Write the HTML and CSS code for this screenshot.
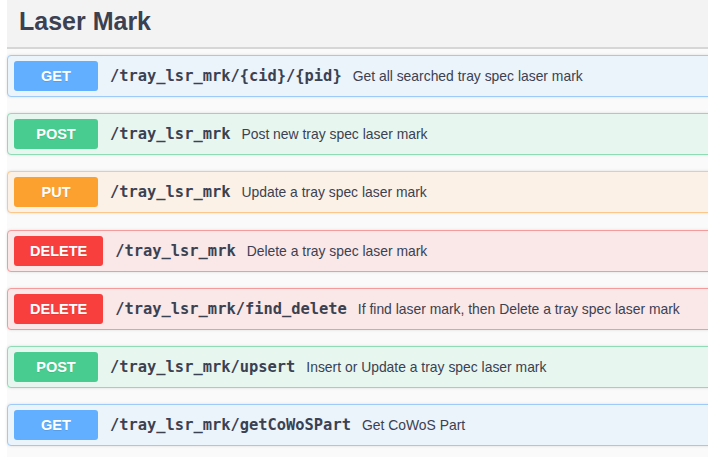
FILE: index.html
```html
<!DOCTYPE html>
<html lang="en">
<head>
<meta charset="utf-8">
<title>Laser Mark</title>
<link rel="stylesheet" href="styles.css">
</head>
<body>
<div class="page">
  <header class="tag-header">
    <h3 class="tag-title">Laser Mark</h3>
  </header>
  <div class="ops">
    <div class="op op-get">
      <span class="method">GET</span>
      <span class="path">/tray_lsr_mrk/{cid}/{pid}</span>
      <span class="desc">Get all searched tray spec laser mark</span>
    </div>
    <div class="op op-post">
      <span class="method">POST</span>
      <span class="path">/tray_lsr_mrk</span>
      <span class="desc">Post new tray spec laser mark</span>
    </div>
    <div class="op op-put">
      <span class="method">PUT</span>
      <span class="path">/tray_lsr_mrk</span>
      <span class="desc">Update a tray spec laser mark</span>
    </div>
    <div class="op op-delete">
      <span class="method">DELETE</span>
      <span class="path">/tray_lsr_mrk</span>
      <span class="desc">Delete a tray spec laser mark</span>
    </div>
    <div class="op op-delete">
      <span class="method">DELETE</span>
      <span class="path">/tray_lsr_mrk/find_delete</span>
      <span class="desc">If find laser mark, then Delete a tray spec laser mark</span>
    </div>
    <div class="op op-post">
      <span class="method">POST</span>
      <span class="path">/tray_lsr_mrk/upsert</span>
      <span class="desc">Insert or Update a tray spec laser mark</span>
    </div>
    <div class="op op-get">
      <span class="method">GET</span>
      <span class="path">/tray_lsr_mrk/getCoWoSPart</span>
      <span class="desc">Get CoWoS Part</span>
    </div>
  </div>
</div>
</body>
</html>
```

FILE: styles.css
```css
html, body {
  margin: 0;
  padding: 0;
  background: #ffffff;
  overflow: hidden;
}

.page {
  margin-left: 7px;
  width: 730px;
  height: 457px;
  background: #fafafa;
  font-family: "Liberation Sans", Arial, sans-serif;
  color: #3b4151;
}

.tag-header {
  height: 47px;
  background: #f3f3f3;
  border-bottom: 2px solid #d6d6d6;
  display: flex;
  align-items: center;
  padding-left: 12px;
  box-sizing: content-box;
}

.tag-title {
  margin: 0;
  font-size: 25px;
  font-weight: bold;
  color: #3b4151;
  line-height: 1;
  position: relative;
  top: -2px;
}

.ops {
  padding-top: 6px;
  display: flex;
  flex-direction: column;
  gap: 16.2px;
}

.op {
  height: 42px;
  box-sizing: border-box;
  border: 1px solid;
  border-radius: 4px;
  padding: 5px 6px;
  display: flex;
  align-items: center;
  box-shadow: 0 0 3px rgba(0, 0, 0, 0.12);
}

.method {
  min-width: 84px;
  height: 30px;
  box-sizing: border-box;
  padding: 0 16px;
  border-radius: 3px;
  display: flex;
  align-items: center;
  justify-content: center;
  color: #ffffff;
  font-weight: bold;
  font-size: 14.5px;
  text-shadow: 0 1px 0 rgba(0, 0, 0, 0.1);
}

.path {
  margin-left: 12px;
  font-family: "DejaVu Sans Mono", "Liberation Mono", monospace;
  font-weight: bold;
  font-size: 15.4px;
  color: #3b4151;
}

.desc {
  margin-left: 11px;
  font-size: 13.9px;
  color: #3b4151;
}

.op-get {
  background: #ebf3fb;
  border-color: #9ecaf8;
}
.op-get .method { background: #61affe; }

.op-post {
  background: #e8f6f0;
  border-color: #8edbb6;
}
.op-post .method { background: #49cc90; }

.op-put {
  background: #fbf1e6;
  border-color: #fbc78a;
}
.op-put .method { background: #fca130; }

.op-delete {
  background: #fae7e7;
  border-color: #f59a9a;
}
.op-delete .method { background: #f93e3e; }
```
